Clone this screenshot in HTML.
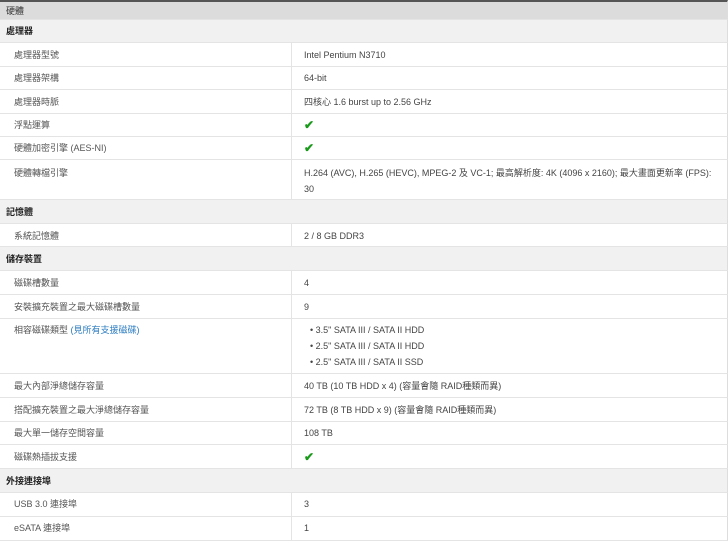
<!DOCTYPE html>
<html><head><meta charset="utf-8"><style>
*{margin:0;padding:0;box-sizing:border-box}
body{width:728px;height:540px;overflow:hidden;background:#fff;font-family:"Liberation Sans","Noto Sans CJK TC",sans-serif;font-size:9px;line-height:12px;color:#555;position:relative}
span{line-height:12px}
.r{position:absolute;left:0;width:728px;border-bottom:1px solid #e4e4e4;border-right:1px solid #ddd}
.h{background:#dcdcdc;border-top:2px solid #555;color:#333}
.s{background:#f1f1f1;color:#222;font-weight:bold}
.l{position:absolute;left:14px}
.v{position:absolute;left:304px;color:#444}
.d{position:absolute;left:291px;top:0;bottom:0;border-left:1px solid #e4e4e4}
.t{position:absolute;left:6px}
.ck{color:#1a9a1a;font-size:12px;font-weight:bold}
a{color:#2a7bc0;text-decoration:none}
</style></head><body>
<div class="r h" style="top:0;height:20px"><span class="t" style="top:3px">硬體</span></div>
<div class="r s" style="top:20px;height:23px"><span class="t" style="top:5px">處理器</span></div>
<div class="r" style="top:43px;height:24px"><div class="d"></div><span class="l" style="top:6px">處理器型號</span><span class="v" style="top:6px">Intel Pentium N3710</span></div>
<div class="r" style="top:67px;height:23px"><div class="d"></div><span class="l" style="top:5px">處理器架構</span><span class="v" style="top:5px">64-bit</span></div>
<div class="r" style="top:90px;height:24px"><div class="d"></div><span class="l" style="top:6px">處理器時脈</span><span class="v" style="top:6px">四核心 1.6 burst up to 2.56 GHz</span></div>
<div class="r" style="top:114px;height:23px"><div class="d"></div><span class="l" style="top:5px">浮點運算</span><span class="v ck" style="top:5px">✔</span></div>
<div class="r" style="top:137px;height:23px"><div class="d"></div><span class="l" style="top:5px">硬體加密引擎 (AES-NI)</span><span class="v ck" style="top:5px">✔</span></div>
<div class="r" style="top:160px;height:40px"><div class="d"></div><span class="l" style="top:7px">硬體轉檔引擎</span><span class="v" style="top:7px">H.264 (AVC), H.265 (HEVC), MPEG-2 及 VC-1; 最高解析度: 4K (4096 x 2160); 最大畫面更新率 (FPS):</span><span class="v" style="top:23px">30</span></div>
<div class="r s" style="top:200px;height:24px"><span class="t" style="top:6px">記憶體</span></div>
<div class="r" style="top:224px;height:23px"><div class="d"></div><span class="l" style="top:6px">系統記憶體</span><span class="v" style="top:6px">2 / 8 GB DDR3</span></div>
<div class="r s" style="top:247px;height:24px"><span class="t" style="top:6px">儲存裝置</span></div>
<div class="r" style="top:271px;height:24px"><div class="d"></div><span class="l" style="top:6px">磁碟槽數量</span><span class="v" style="top:6px">4</span></div>
<div class="r" style="top:295px;height:24px"><div class="d"></div><span class="l" style="top:6px">安裝擴充裝置之最大磁碟槽數量</span><span class="v" style="top:6px">9</span></div>
<div class="r" style="top:319px;height:55px"><div class="d"></div><span class="l" style="top:5px">相容磁碟類型 <a>(見所有支援磁碟)</a></span>
<span class="v" style="top:5px;left:310px">• 3.5" SATA III / SATA II HDD</span>
<span class="v" style="top:21px;left:310px">• 2.5" SATA III / SATA II HDD</span>
<span class="v" style="top:37px;left:310px">• 2.5" SATA III / SATA II SSD</span></div>
<div class="r" style="top:374px;height:24px"><div class="d"></div><span class="l" style="top:6px">最大內部淨總儲存容量</span><span class="v" style="top:6px">40 TB (10 TB HDD x 4) (容量會隨 RAID種類而異)</span></div>
<div class="r" style="top:398px;height:24px"><div class="d"></div><span class="l" style="top:6px">搭配擴充裝置之最大淨總儲存容量</span><span class="v" style="top:6px">72 TB (8 TB HDD x 9) (容量會隨 RAID種類而異)</span></div>
<div class="r" style="top:422px;height:23px"><div class="d"></div><span class="l" style="top:5px">最大單一儲存空間容量</span><span class="v" style="top:5px">108 TB</span></div>
<div class="r" style="top:445px;height:24px"><div class="d"></div><span class="l" style="top:6px">磁碟熱插拔支援</span><span class="v ck" style="top:6px">✔</span></div>
<div class="r s" style="top:469px;height:24px"><span class="t" style="top:6px">外接連接埠</span></div>
<div class="r" style="top:493px;height:24px"><div class="d"></div><span class="l" style="top:5px">USB 3.0 連接埠</span><span class="v" style="top:5px">3</span></div>
<div class="r" style="top:517px;height:24px"><div class="d"></div><span class="l" style="top:5px">eSATA 連接埠</span><span class="v" style="top:5px">1</span></div>
</body></html>
